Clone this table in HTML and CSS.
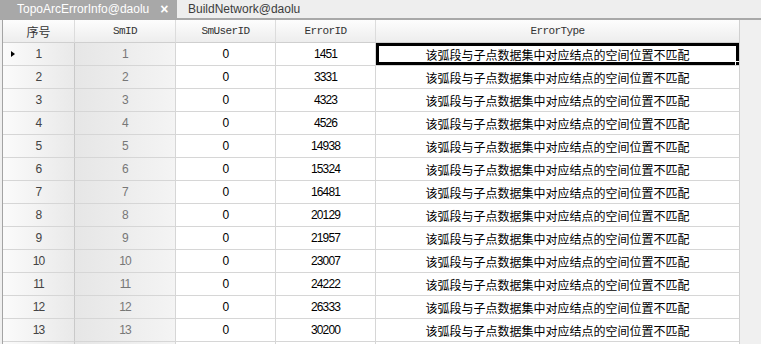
FILE: index.html
```html
<!DOCTYPE html>
<html lang="zh">
<head>
<meta charset="utf-8">
<title>TopoArcErrorInfo@daolu</title>
<link rel="stylesheet" href="styles.css">
</head>
<body>
<div class="tabs">
  <div class="tab active"><span>TopoArcErrorInfo@daolu</span><span class="close">×</span></div>
  <div class="tab"><span>BuildNetwork@daolu</span></div>
</div>
<div class="panel">
  <div class="grid">
    <div class="hd cjk">序号</div>
    <div class="hd mono">SmID</div>
    <div class="hd mono">SmUserID</div>
    <div class="hd mono">ErrorID</div>
    <div class="hd mono last">ErrorType</div>

    <div class="rh cur"><span class="ind"></span>1</div><div class="sid">1</div><div class="c">0</div><div class="c">1451</div><div class="c t last sel">该弧段与子点数据集中对应结点的空间位置不匹配<span class="handle"></span></div>
    <div class="rh">2</div><div class="sid">2</div><div class="c">0</div><div class="c">3331</div><div class="c t last">该弧段与子点数据集中对应结点的空间位置不匹配</div>
    <div class="rh">3</div><div class="sid">3</div><div class="c">0</div><div class="c">4323</div><div class="c t last">该弧段与子点数据集中对应结点的空间位置不匹配</div>
    <div class="rh">4</div><div class="sid">4</div><div class="c">0</div><div class="c">4526</div><div class="c t last">该弧段与子点数据集中对应结点的空间位置不匹配</div>
    <div class="rh">5</div><div class="sid">5</div><div class="c">0</div><div class="c">14938</div><div class="c t last">该弧段与子点数据集中对应结点的空间位置不匹配</div>
    <div class="rh">6</div><div class="sid">6</div><div class="c">0</div><div class="c">15324</div><div class="c t last">该弧段与子点数据集中对应结点的空间位置不匹配</div>
    <div class="rh">7</div><div class="sid">7</div><div class="c">0</div><div class="c">16481</div><div class="c t last">该弧段与子点数据集中对应结点的空间位置不匹配</div>
    <div class="rh">8</div><div class="sid">8</div><div class="c">0</div><div class="c">20129</div><div class="c t last">该弧段与子点数据集中对应结点的空间位置不匹配</div>
    <div class="rh">9</div><div class="sid">9</div><div class="c">0</div><div class="c">21957</div><div class="c t last">该弧段与子点数据集中对应结点的空间位置不匹配</div>
    <div class="rh">10</div><div class="sid">10</div><div class="c">0</div><div class="c">23007</div><div class="c t last">该弧段与子点数据集中对应结点的空间位置不匹配</div>
    <div class="rh">11</div><div class="sid">11</div><div class="c">0</div><div class="c">24222</div><div class="c t last">该弧段与子点数据集中对应结点的空间位置不匹配</div>
    <div class="rh">12</div><div class="sid">12</div><div class="c">0</div><div class="c">26333</div><div class="c t last">该弧段与子点数据集中对应结点的空间位置不匹配</div>
    <div class="rh">13</div><div class="sid">13</div><div class="c">0</div><div class="c">30200</div><div class="c t last">该弧段与子点数据集中对应结点的空间位置不匹配</div>
    <div class="rh"></div><div class="sid"></div><div class="c"></div><div class="c"></div><div class="c t last"></div>
  </div>
</div>
</body>
</html>
```

FILE: styles.css
```css
* { box-sizing: border-box; }
html, body { margin: 0; padding: 0; }
body {
  width: 761px;
  height: 344px;
  overflow: hidden;
  background: #f0f0f0;
  font-family: "Liberation Sans", Arial, sans-serif;
}
.tabs {
  display: flex;
  height: 20px;
  background: #eeeeee;
  border-bottom: 2px solid #a8a8a8;
}
.tab {
  display: flex;
  align-items: center;
  height: 18px;
  padding-left: 11px;
  font-size: 12px;
  color: #3c3c3c;
}
.tab.active {
  width: 177px;
  padding-left: 17px;
  background: #a8a8a8;
  color: #ffffff;
}
.tab .close {
  margin-left: 11px;
  font-size: 14px;
  font-weight: bold;
}
.panel {
  display: flex;
  padding-left: 2px;
}
.grid {
  display: grid;
  grid-template-columns: 72px 101px 100px 100px 364px;
  grid-auto-rows: 23px;
  border-left: 1px solid #a4a4a4;
  background: #ffffff;
}
.grid > div {
  display: flex;
  align-items: center;
  justify-content: center;
  border-right: 1px solid #d6d6d6;
  border-bottom: 1px solid #d6d6d6;
  font-size: 12px;
  color: #000;
  letter-spacing: -0.9px;
  white-space: nowrap;
  overflow: hidden;
}
.grid > .hd {
  background: linear-gradient(#fdfdfd, #ededed);
  border-right-color: #dcdcdc;
  border-bottom-color: #cfcfcf;
  color: #333;
}
.grid > .hd.cjk {
  font-family: "Noto Sans CJK SC", sans-serif;
  font-size: 12px;
  letter-spacing: 0;
}
.grid > .hd.mono {
  font-family: "Liberation Mono", monospace;
  font-size: 11px;
  letter-spacing: -0.6px;
}
.grid > .rh {
  position: relative;
  background: linear-gradient(to right, #fbfbfb, #e9e9e9);
  border-right: 1px solid #c9c9c9;
  color: #444;
}
.grid > .sid {
  background: linear-gradient(to right, #e6e6e6, #f4f4f4);
  color: #777;
}
.grid > .t {
  font-family: "Noto Sans CJK SC", sans-serif;
  font-size: 12px;
  letter-spacing: 0;
}
.grid > .last {
  border-right-color: #d0d0d0;
}
.grid > .sel {
  position: relative;
  box-shadow: inset 0 0 0 3px #000;
}
.handle {
  position: absolute;
  right: -1px;
  bottom: -1px;
  width: 5px;
  height: 5px;
  background: #000;
  border-left: 1px solid #fff;
  border-top: 1px solid #fff;
}
.ind {
  position: absolute;
  left: 8px;
  top: 8px;
  width: 0;
  height: 0;
  border-top: 3.5px solid transparent;
  border-bottom: 3.5px solid transparent;
  border-left: 4px solid #000;
}
```
